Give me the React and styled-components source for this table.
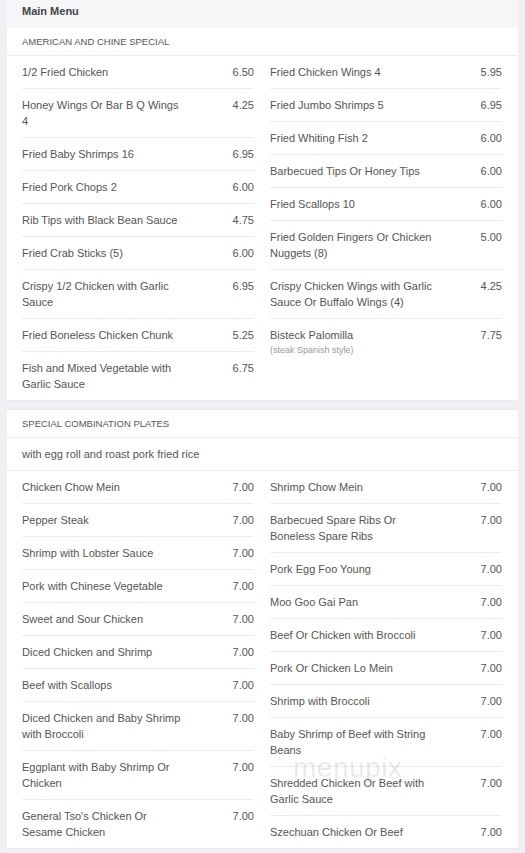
import React from 'react'
import styled, { createGlobalStyle } from 'styled-components'

const GlobalStyle = createGlobalStyle`
  html, body {
    margin: 0;
    padding: 0;
    background: #efeff4;
  }
  body {
    font-family: "Liberation Sans", Arial, sans-serif;
    color: #555;
  }
`

const Page = styled.div`
  position: relative;
  padding: 0 7px;
`

const TopBar = styled.div`
  background: #f6f6f8;
  padding: 3px 15px 9px;
  font-size: 11px;
  line-height: 16px;
  font-weight: bold;
  color: #444;
`

const Card = styled.section`
  background: #fff;
  border-top: ${p => (p.$first ? '0' : '1px solid #e8e8ee')};
  border-bottom: 1px solid #e8e8ee;
  margin-top: ${p => (p.$first ? '0' : '8px')};
`

const SectionTitle = styled.div`
  padding: 6px 15px 5px;
  font-size: 9.5px;
  line-height: 16px;
  text-transform: uppercase;
  color: #555;
  border-bottom: 1px solid #ececf0;
`

const Note = styled.div`
  padding: 8px 15px 8px;
  font-size: 11px;
  line-height: 16px;
  border-bottom: 1px solid #ececf0;
`

const Columns = styled.div`
  display: grid;
  grid-template-columns: 1fr 1fr;
  column-gap: 16px;
  padding: 0 16px 0 15px;
`

const Column = styled.div`
  display: flex;
  flex-direction: column;
`

const Row = styled.div`
  display: flex;
  justify-content: space-between;
  align-items: flex-start;
  padding: 8px 0;
  border-bottom: 1px solid #ececec;
  font-size: 11px;
  line-height: 16px;

  &:last-child {
    border-bottom: 0;
  }
`

const Name = styled.div`
  flex: 0 0 163px;
`

const Sub = styled.div`
  font-size: 9px;
  line-height: 14px;
  color: #999;
`

const Price = styled.div`
  text-align: right;
`

const Watermark = styled.div`
  position: absolute;
  left: 293px;
  top: 754px;
  font-size: 28px;
  line-height: 28px;
  font-weight: 300;
  letter-spacing: 0.5px;
  color: rgba(0, 0, 0, 0.09);
  pointer-events: none;
`

const american = {
  left: [
    ['1/2 Fried Chicken', '6.50'],
    ['Honey Wings Or Bar B Q Wings 4', '4.25'],
    ['Fried Baby Shrimps 16', '6.95'],
    ['Fried Pork Chops 2', '6.00'],
    ['Rib Tips with Black Bean Sauce', '4.75'],
    ['Fried Crab Sticks (5)', '6.00'],
    ['Crispy 1/2 Chicken with Garlic Sauce', '6.95'],
    ['Fried Boneless Chicken Chunk', '5.25'],
    ['Fish and Mixed Vegetable with Garlic Sauce', '6.75'],
  ],
  right: [
    ['Fried Chicken Wings 4', '5.95'],
    ['Fried Jumbo Shrimps 5', '6.95'],
    ['Fried Whiting Fish 2', '6.00'],
    ['Barbecued Tips Or Honey Tips', '6.00'],
    ['Fried Scallops 10', '6.00'],
    ['Fried Golden Fingers Or Chicken Nuggets (8)', '5.00'],
    ['Crispy Chicken Wings with Garlic Sauce Or Buffalo Wings (4)', '4.25'],
    ['Bisteck Palomilla', '7.75', '(steak Spanish style)'],
  ],
}

const combination = {
  left: [
    ['Chicken Chow Mein', '7.00'],
    ['Pepper Steak', '7.00'],
    ['Shrimp with Lobster Sauce', '7.00'],
    ['Pork with Chinese Vegetable', '7.00'],
    ['Sweet and Sour Chicken', '7.00'],
    ['Diced Chicken and Shrimp', '7.00'],
    ['Beef with Scallops', '7.00'],
    ['Diced Chicken and Baby Shrimp with Broccoli', '7.00'],
    ['Eggplant with Baby Shrimp Or Chicken', '7.00'],
    ["General Tso's Chicken Or Sesame Chicken", '7.00'],
  ],
  right: [
    ['Shrimp Chow Mein', '7.00'],
    ['Barbecued Spare Ribs Or Boneless Spare Ribs', '7.00'],
    ['Pork Egg Foo Young', '7.00'],
    ['Moo Goo Gai Pan', '7.00'],
    ['Beef Or Chicken with Broccoli', '7.00'],
    ['Pork Or Chicken Lo Mein', '7.00'],
    ['Shrimp with Broccoli', '7.00'],
    ['Baby Shrimp of Beef with String Beans', '7.00'],
    ['Shredded Chicken Or Beef with Garlic Sauce', '7.00'],
    ['Szechuan Chicken Or Beef', '7.00'],
  ],
}

function ItemList({ items }) {
  return (
    <Column>
      {items.map(([name, price, sub]) => (
        <Row key={name}>
          <Name>
            {name}
            {sub && <Sub>{sub}</Sub>}
          </Name>
          <Price>{price}</Price>
        </Row>
      ))}
    </Column>
  )
}

export default function App() {
  return (
    <Page>
      <GlobalStyle />
      <TopBar>Main Menu</TopBar>
      <Card $first>
        <SectionTitle>American and Chine Special</SectionTitle>
        <Columns>
          <ItemList items={american.left} />
          <ItemList items={american.right} />
        </Columns>
      </Card>
      <Card>
        <SectionTitle>Special Combination Plates</SectionTitle>
        <Note>with egg roll and roast pork fried rice</Note>
        <Columns>
          <ItemList items={combination.left} />
          <ItemList items={combination.right} />
        </Columns>
      </Card>
      <Watermark>menupix</Watermark>
    </Page>
  )
}
